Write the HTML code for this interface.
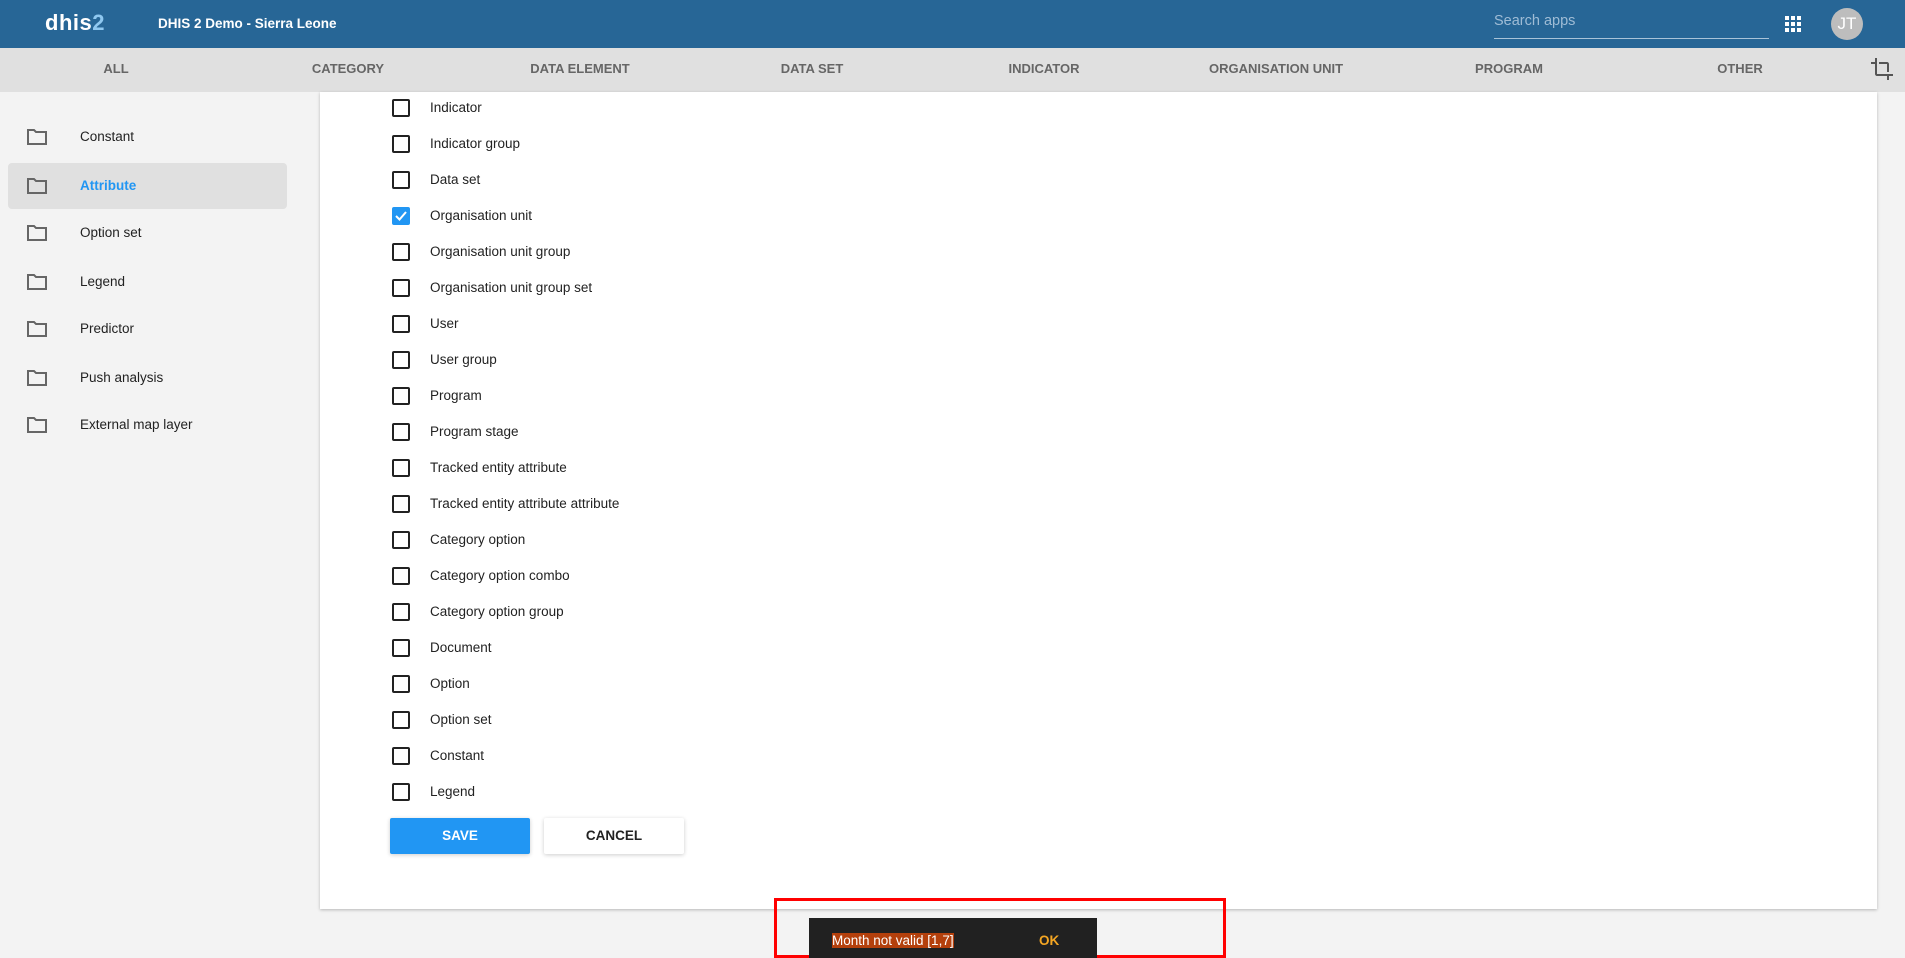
<!DOCTYPE html>
<html><head><meta charset="utf-8"><style>
*{box-sizing:border-box;margin:0;padding:0}
body{width:1905px;height:951px;overflow:hidden;background:#f3f3f3;font-family:"Liberation Sans",sans-serif;position:relative;color:#222}
.hdr{position:absolute;left:0;top:0;width:1905px;height:48px;background:#276696}
.logo{position:absolute;left:45px;top:10px;font-size:22px;font-weight:bold;color:#fff;letter-spacing:0.5px}
.logo span{color:#8fc8f0}
.title{position:absolute;left:158px;top:16px;font-size:13.5px;font-weight:bold;color:#fff}
.search{position:absolute;left:1494px;top:12px;width:275px;height:27px;border-bottom:1px solid #a9c3d8;color:#9fbcd5;font-size:14.5px;padding-top:1px}
.grid{position:absolute;left:1785px;top:16px;width:16px;height:16px;display:grid;grid-template-columns:repeat(3,4px);gap:2px}
.grid i{background:#fff;width:4px;height:4px}
.av{position:absolute;left:1831px;top:8px;width:32px;height:32px;border-radius:50%;background:#bdbdbd;color:#fff;font-size:17px;text-align:center;line-height:32px}
.tabs{position:absolute;left:0;top:48px;width:1905px;height:44px;background:#e0e0e0}
.tab{position:absolute;top:13px;font-size:13px;font-weight:bold;color:#666;transform:translateX(-50%)}
.side{position:absolute;left:0;top:92px;width:300px}
.item{position:absolute;left:8px;width:279px;height:46px;border-radius:4px}
.item.sel{background:#e0e0e0}
.item svg{position:absolute;left:18px;top:14px}
.item span{position:absolute;left:72px;top:15px;font-size:13.5px;color:#222}
.item.sel span{color:#2196f3;font-weight:bold}
.card{position:absolute;left:320px;top:92px;width:1557px;height:817px;background:#fff;box-shadow:0 1px 3px rgba(0,0,0,.25)}
.row{position:absolute;left:392px;height:20px}
.cb{position:absolute;left:0;top:0;width:18px;height:18px;border:2px solid #222;border-radius:2px}
.cb.on{background:#2196f3;border-color:#2196f3}
.row span{position:absolute;left:38px;top:1px;font-size:13.5px;white-space:nowrap;color:#222}
.btn{position:absolute;top:818px;width:140px;height:36px;border-radius:2px;font-size:13.5px;font-weight:bold;text-align:center;line-height:36px;box-shadow:0 1px 4px rgba(0,0,0,.2)}
.red{position:absolute;left:774px;top:898px;width:452px;height:60px;border:3px solid #f00}
.snack{position:absolute;left:809px;top:918px;width:288px;height:40px;background:#212121}
.snack .m{position:absolute;left:23px;top:15px;font-size:13.5px;color:#fff;background:#b4400c}
.snack .ok{position:absolute;left:230px;top:15px;font-size:13.5px;color:#f5a623;font-weight:bold}
</style></head><body>
<div class="hdr">
<div class="logo">dhis<span>2</span></div>
<div class="title">DHIS 2 Demo - Sierra Leone</div>
<div class="search">Search apps</div>
<div class="grid"><i></i><i></i><i></i><i></i><i></i><i></i><i></i><i></i><i></i></div>
<div class="av">JT</div>
</div>
<div class="tabs">
<div class="tab" style="left:116px">ALL</div>
<div class="tab" style="left:348px">CATEGORY</div>
<div class="tab" style="left:580px">DATA ELEMENT</div>
<div class="tab" style="left:812px">DATA SET</div>
<div class="tab" style="left:1044px">INDICATOR</div>
<div class="tab" style="left:1276px">ORGANISATION UNIT</div>
<div class="tab" style="left:1509px">PROGRAM</div>
<div class="tab" style="left:1740px">OTHER</div>
<svg style="position:absolute;left:1870px;top:9px" width="24" height="24" viewBox="0 0 24 24"><path fill="#555" d="M7 17V1H5v4H1v2h4v10c0 1.1.9 2 2 2h10v4h2v-4h4v-2H7zm10-2h2V7c0-1.1-.9-2-2-2H9v2h8v8z"/></svg>
</div>
<div class="side">
<div class="item" style="top:22px"><svg width="22" height="18" viewBox="0 0 22 18"><path d="M2 2h6l2 2h10v12H2z" fill="none" stroke="#666" stroke-width="2"/></svg><span>Constant</span></div>
<div class="item sel" style="top:71px"><svg width="22" height="18" viewBox="0 0 22 18"><path d="M2 2h6l2 2h10v12H2z" fill="none" stroke="#666" stroke-width="2"/></svg><span>Attribute</span></div>
<div class="item" style="top:118px"><svg width="22" height="18" viewBox="0 0 22 18"><path d="M2 2h6l2 2h10v12H2z" fill="none" stroke="#666" stroke-width="2"/></svg><span>Option set</span></div>
<div class="item" style="top:167px"><svg width="22" height="18" viewBox="0 0 22 18"><path d="M2 2h6l2 2h10v12H2z" fill="none" stroke="#666" stroke-width="2"/></svg><span>Legend</span></div>
<div class="item" style="top:214px"><svg width="22" height="18" viewBox="0 0 22 18"><path d="M2 2h6l2 2h10v12H2z" fill="none" stroke="#666" stroke-width="2"/></svg><span>Predictor</span></div>
<div class="item" style="top:263px"><svg width="22" height="18" viewBox="0 0 22 18"><path d="M2 2h6l2 2h10v12H2z" fill="none" stroke="#666" stroke-width="2"/></svg><span>Push analysis</span></div>
<div class="item" style="top:310px"><svg width="22" height="18" viewBox="0 0 22 18"><path d="M2 2h6l2 2h10v12H2z" fill="none" stroke="#666" stroke-width="2"/></svg><span>External map layer</span></div>
</div>
<div class="card"></div>
<div class="row" style="top:99px"><div class="cb"></div><span>Indicator</span></div>
<div class="row" style="top:135px"><div class="cb"></div><span>Indicator group</span></div>
<div class="row" style="top:171px"><div class="cb"></div><span>Data set</span></div>
<div class="row" style="top:207px"><div class="cb on"><svg width="14" height="14" viewBox="0 0 14 14" style="position:absolute;left:0;top:0"><path d="M2 7l3.5 3.5L12 3" stroke="#fff" stroke-width="2" fill="none"/></svg></div><span>Organisation unit</span></div>
<div class="row" style="top:243px"><div class="cb"></div><span>Organisation unit group</span></div>
<div class="row" style="top:279px"><div class="cb"></div><span>Organisation unit group set</span></div>
<div class="row" style="top:315px"><div class="cb"></div><span>User</span></div>
<div class="row" style="top:351px"><div class="cb"></div><span>User group</span></div>
<div class="row" style="top:387px"><div class="cb"></div><span>Program</span></div>
<div class="row" style="top:423px"><div class="cb"></div><span>Program stage</span></div>
<div class="row" style="top:459px"><div class="cb"></div><span>Tracked entity attribute</span></div>
<div class="row" style="top:495px"><div class="cb"></div><span>Tracked entity attribute attribute</span></div>
<div class="row" style="top:531px"><div class="cb"></div><span>Category option</span></div>
<div class="row" style="top:567px"><div class="cb"></div><span>Category option combo</span></div>
<div class="row" style="top:603px"><div class="cb"></div><span>Category option group</span></div>
<div class="row" style="top:639px"><div class="cb"></div><span>Document</span></div>
<div class="row" style="top:675px"><div class="cb"></div><span>Option</span></div>
<div class="row" style="top:711px"><div class="cb"></div><span>Option set</span></div>
<div class="row" style="top:747px"><div class="cb"></div><span>Constant</span></div>
<div class="row" style="top:783px"><div class="cb"></div><span>Legend</span></div>
<div class="btn" style="left:390px;background:#2196f3;color:#fff">SAVE</div>
<div class="btn" style="left:544px;background:#fff;color:#222">CANCEL</div>
<div class="red"></div>
<div class="snack"><span class="m">Month not valid [1,7]</span><span class="ok">OK</span></div>
</body></html>
